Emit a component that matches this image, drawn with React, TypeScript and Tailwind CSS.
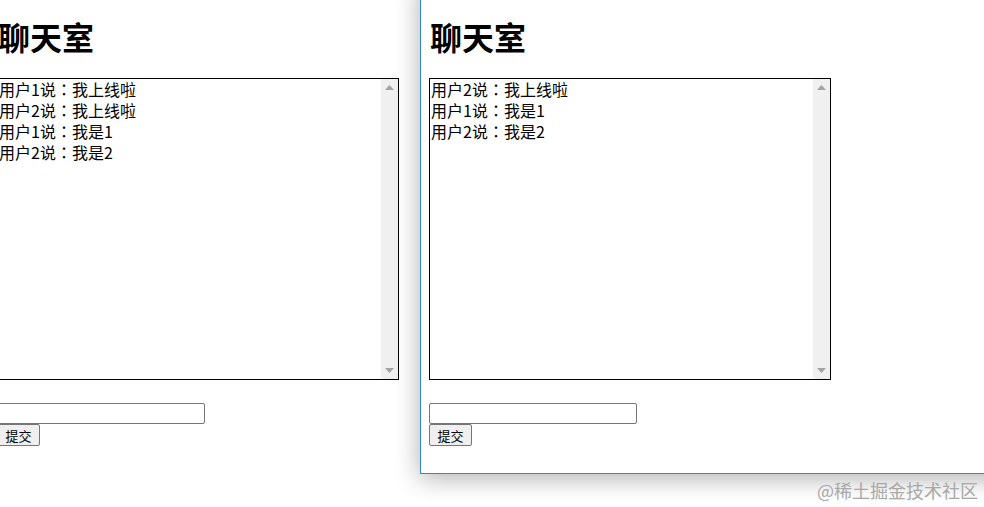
import React from "react";

const font = { fontFamily: '"Noto Sans CJK SC", "Noto Sans", sans-serif' };
const colonFont = { fontFamily: '"Noto Sans CJK TC", "Noto Sans CJK SC", sans-serif' };

function Line({ text }: { text: string }) {
  const [a, b] = text.split("：");
  return (
    <div>
      {a}
      <span style={colonFont}>：</span>
      {b}
    </div>
  );
}

function ScrollBox({ lines }: { lines: string[] }) {
  return (
    <div className="flex w-[402px] h-[302px] border border-black bg-white">
      <div className="flex-1 pl-[1px] pt-0 text-[16px] leading-[21px] text-black">
        {lines.map((l, i) => (
          <Line key={i} text={l} />
        ))}
      </div>
      <div className="flex w-[17px] flex-col items-center justify-between bg-[#f0f0f0] py-[6px]">
        <svg width="9" height="5" viewBox="0 0 9 5">
          <polygon points="4.5,0 9,5 0,5" fill="#a3a3a3" />
        </svg>
        <svg width="9" height="5" viewBox="0 0 9 5">
          <polygon points="0,0 9,0 4.5,5" fill="#a3a3a3" />
        </svg>
      </div>
    </div>
  );
}

function ChatPage({ lines }: { lines: string[] }) {
  return (
    <div className="flex flex-col items-start pl-[8px]" style={font}>
      <h1 className="mt-[18px] mb-[24px] pl-[1px] text-[32px] font-bold leading-[36px] text-black">
        聊天室
      </h1>
      <ScrollBox lines={lines} />
      <div className="mt-[23px] h-[21px] w-[208px] rounded-[2px] border border-[#767676] bg-white" />
      <button className="flex h-[22px] w-[43px] items-center justify-center rounded-[2px] border border-[#767676] bg-[#efefef] text-[13px] leading-none text-black">
        提交
      </button>
    </div>
  );
}

export default function App() {
  return (
    <div className="relative h-[507px] w-[984px] overflow-hidden bg-white">
      <div className="absolute left-[-11px] top-0 w-[430px]">
        <ChatPage
          lines={["用户1说：我上线啦", "用户2说：我上线啦", "用户1说：我是1", "用户2说：我是2"]}
        />
      </div>
      <div className="absolute left-[420px] top-[-20px] h-[494px] w-[620px] border-b border-l border-[#2f8ac2] bg-white pt-[20px] shadow-[0_4px_24px_rgba(0,0,0,0.32)]">
        <ChatPage lines={["用户2说：我上线啦", "用户1说：我是1", "用户2说：我是2"]} />
      </div>
      <div
        className="absolute left-[817px] top-[478px] text-[18px] leading-[24px] text-[#a8a8a8]"
        style={font}
      >
        @稀土掘金技术社区
      </div>
    </div>
  );
}
